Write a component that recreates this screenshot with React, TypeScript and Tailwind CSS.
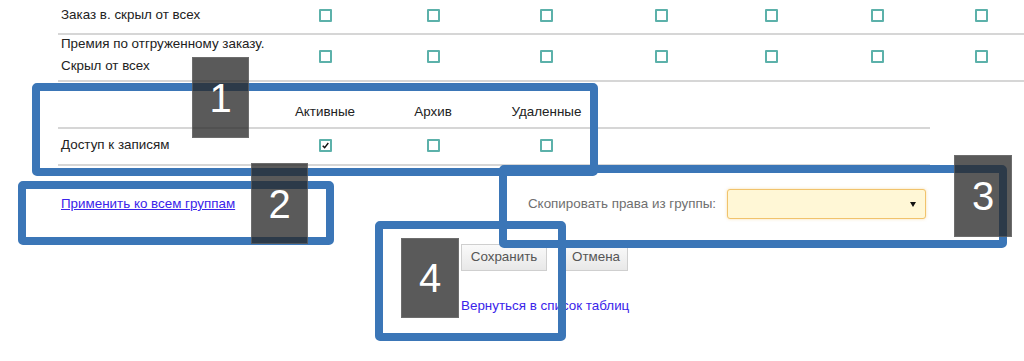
import type { ReactNode } from 'react';

const cols = 'grid grid-cols-[214px_106px_110px_117px_113px_107px_105px_102px]';

function Box({ checked = false }: { checked?: boolean }) {
  return (
    <div className="flex items-center justify-center">
      <div className="relative w-[13px] h-[13px] border-2 border-[#5cb1aa] rounded-[1px] bg-white">
        {checked && (
          <svg viewBox="0 0 10 10" className="absolute left-[1px] top-[1px] w-[7px] h-[7px]">
            <path d="M1 5.2 L3.8 8 L9 1.5" fill="none" stroke="#111" strokeWidth="2" />
          </svg>
        )}
      </div>
    </div>
  );
}

function Row({ label, n, className, children }: { label?: ReactNode; n: number; className: string; children?: ReactNode }) {
  return (
    <div className={`${cols} ${className} border-b-2 border-[#d6d6d6] items-center`}>
      <div className="pl-[3px]">{label}</div>
      {children ?? Array.from({ length: n }).map((_, i) => <Box key={i} />)}
    </div>
  );
}

function Frame({ className }: { className: string }) {
  return <div className={`absolute border-[8px] border-[#3b76b7] rounded-[5px] ${className}`} />;
}

function Tag({ n, className }: { n: string; className: string }) {
  return (
    <div className={`absolute bg-[rgba(40,40,40,0.77)] border border-[#8a8a8a]/40 flex items-center justify-center text-white text-[40px] leading-none ${className}`}>
      {n}
    </div>
  );
}

export default function App() {
  return (
    <div
      className="relative w-[1024px] h-[361px] overflow-hidden bg-white text-[13.4px] text-[#222]"
      style={{ fontFamily: '"Liberation Sans", Arial, sans-serif' }}
    >
      <div className="pl-[58px]">
        {/* permissions table */}
        <div className="w-[1010px]">
          <Row n={7} className="h-[35px] pb-[3px]" label="Заказ в. скрыл от всех" />
          <Row
            n={7}
            className="h-[47px] pb-[3px]"
            label={
              <div className="leading-[22px] -mt-[2px]">
                Премия по отгруженному заказу.
                <br />
                Скрыл от всех
              </div>
            }
          />
        </div>

        {/* record access */}
        <div className="w-[872px] mt-[17px]">
          <div className={`${cols} h-[30px] border-b-2 border-[#d6d6d6] items-center pb-[2px]`}>
            <div />
            <div className="text-center">Активные</div>
            <div className="text-center">Архив</div>
            <div className="text-center">Удаленные</div>
          </div>
          <Row n={0} className="h-[37px] pb-[2px]" label="Доступ к записям">
            <Box checked />
            <Box />
            <Box />
          </Row>
        </div>

        {/* apply / copy */}
        <div className="w-[872px] mt-[23px] h-[30px] flex items-center">
          <a href="#" className="pl-[3px] text-[#3a24ea] underline">Применить ко всем группам</a>
          <div className="ml-auto pr-[4px] flex items-center gap-[11px]">
            <span className="text-[#6f6f6f]">Скопировать права из группы:</span>
            <div className="relative w-[199px] h-[30px] bg-[#fff7d6] border border-[#f1c36c] rounded-[3px] shadow-[0_0_3px_rgba(240,190,90,0.5)]">
              <svg viewBox="0 0 6 5" className="absolute right-[9px] top-[12px] w-[6px] h-[5px]">
                <path d="M0 0 H6 L3 5 Z" fill="#111" />
              </svg>
            </div>
          </div>
        </div>

        {/* actions */}
        <div className="ml-[403px] mt-[25px] flex gap-[17px]">
          <button className="w-[86px] h-[27px] bg-gradient-to-b from-[#fafafa] to-[#e8e8e8] border border-[#cfcfcf] text-[#555]">
            Сохранить
          </button>
          <button className="w-[64px] h-[27px] bg-gradient-to-b from-[#fafafa] to-[#e8e8e8] border border-[#cfcfcf] text-[#555]">
            Отмена
          </button>
        </div>
        <div className="ml-[403px] mt-[27px] leading-[16px]">
          <a href="#" className="text-[#3a24ea]">Вернуться в список таблиц</a>
        </div>
      </div>

      {/* annotation overlay */}
      <Frame className="left-[32px] top-[83px] w-[566px] h-[93px]" />
      <Frame className="left-[18px] top-[181px] w-[316px] h-[64px]" />
      <Frame className="left-[499px] top-[165px] w-[508px] h-[83px]" />
      <Frame className="left-[375px] top-[221px] w-[191px] h-[120px]" />
      <Tag n="1" className="left-[192px] top-[57px] w-[57px] h-[81px]" />
      <Tag n="2" className="left-[251px] top-[163px] w-[57px] h-[81px]" />
      <Tag n="3" className="left-[954px] top-[155px] w-[58px] h-[82px]" />
      <Tag n="4" className="left-[401px] top-[238px] w-[58px] h-[80px]" />
    </div>
  );
}
